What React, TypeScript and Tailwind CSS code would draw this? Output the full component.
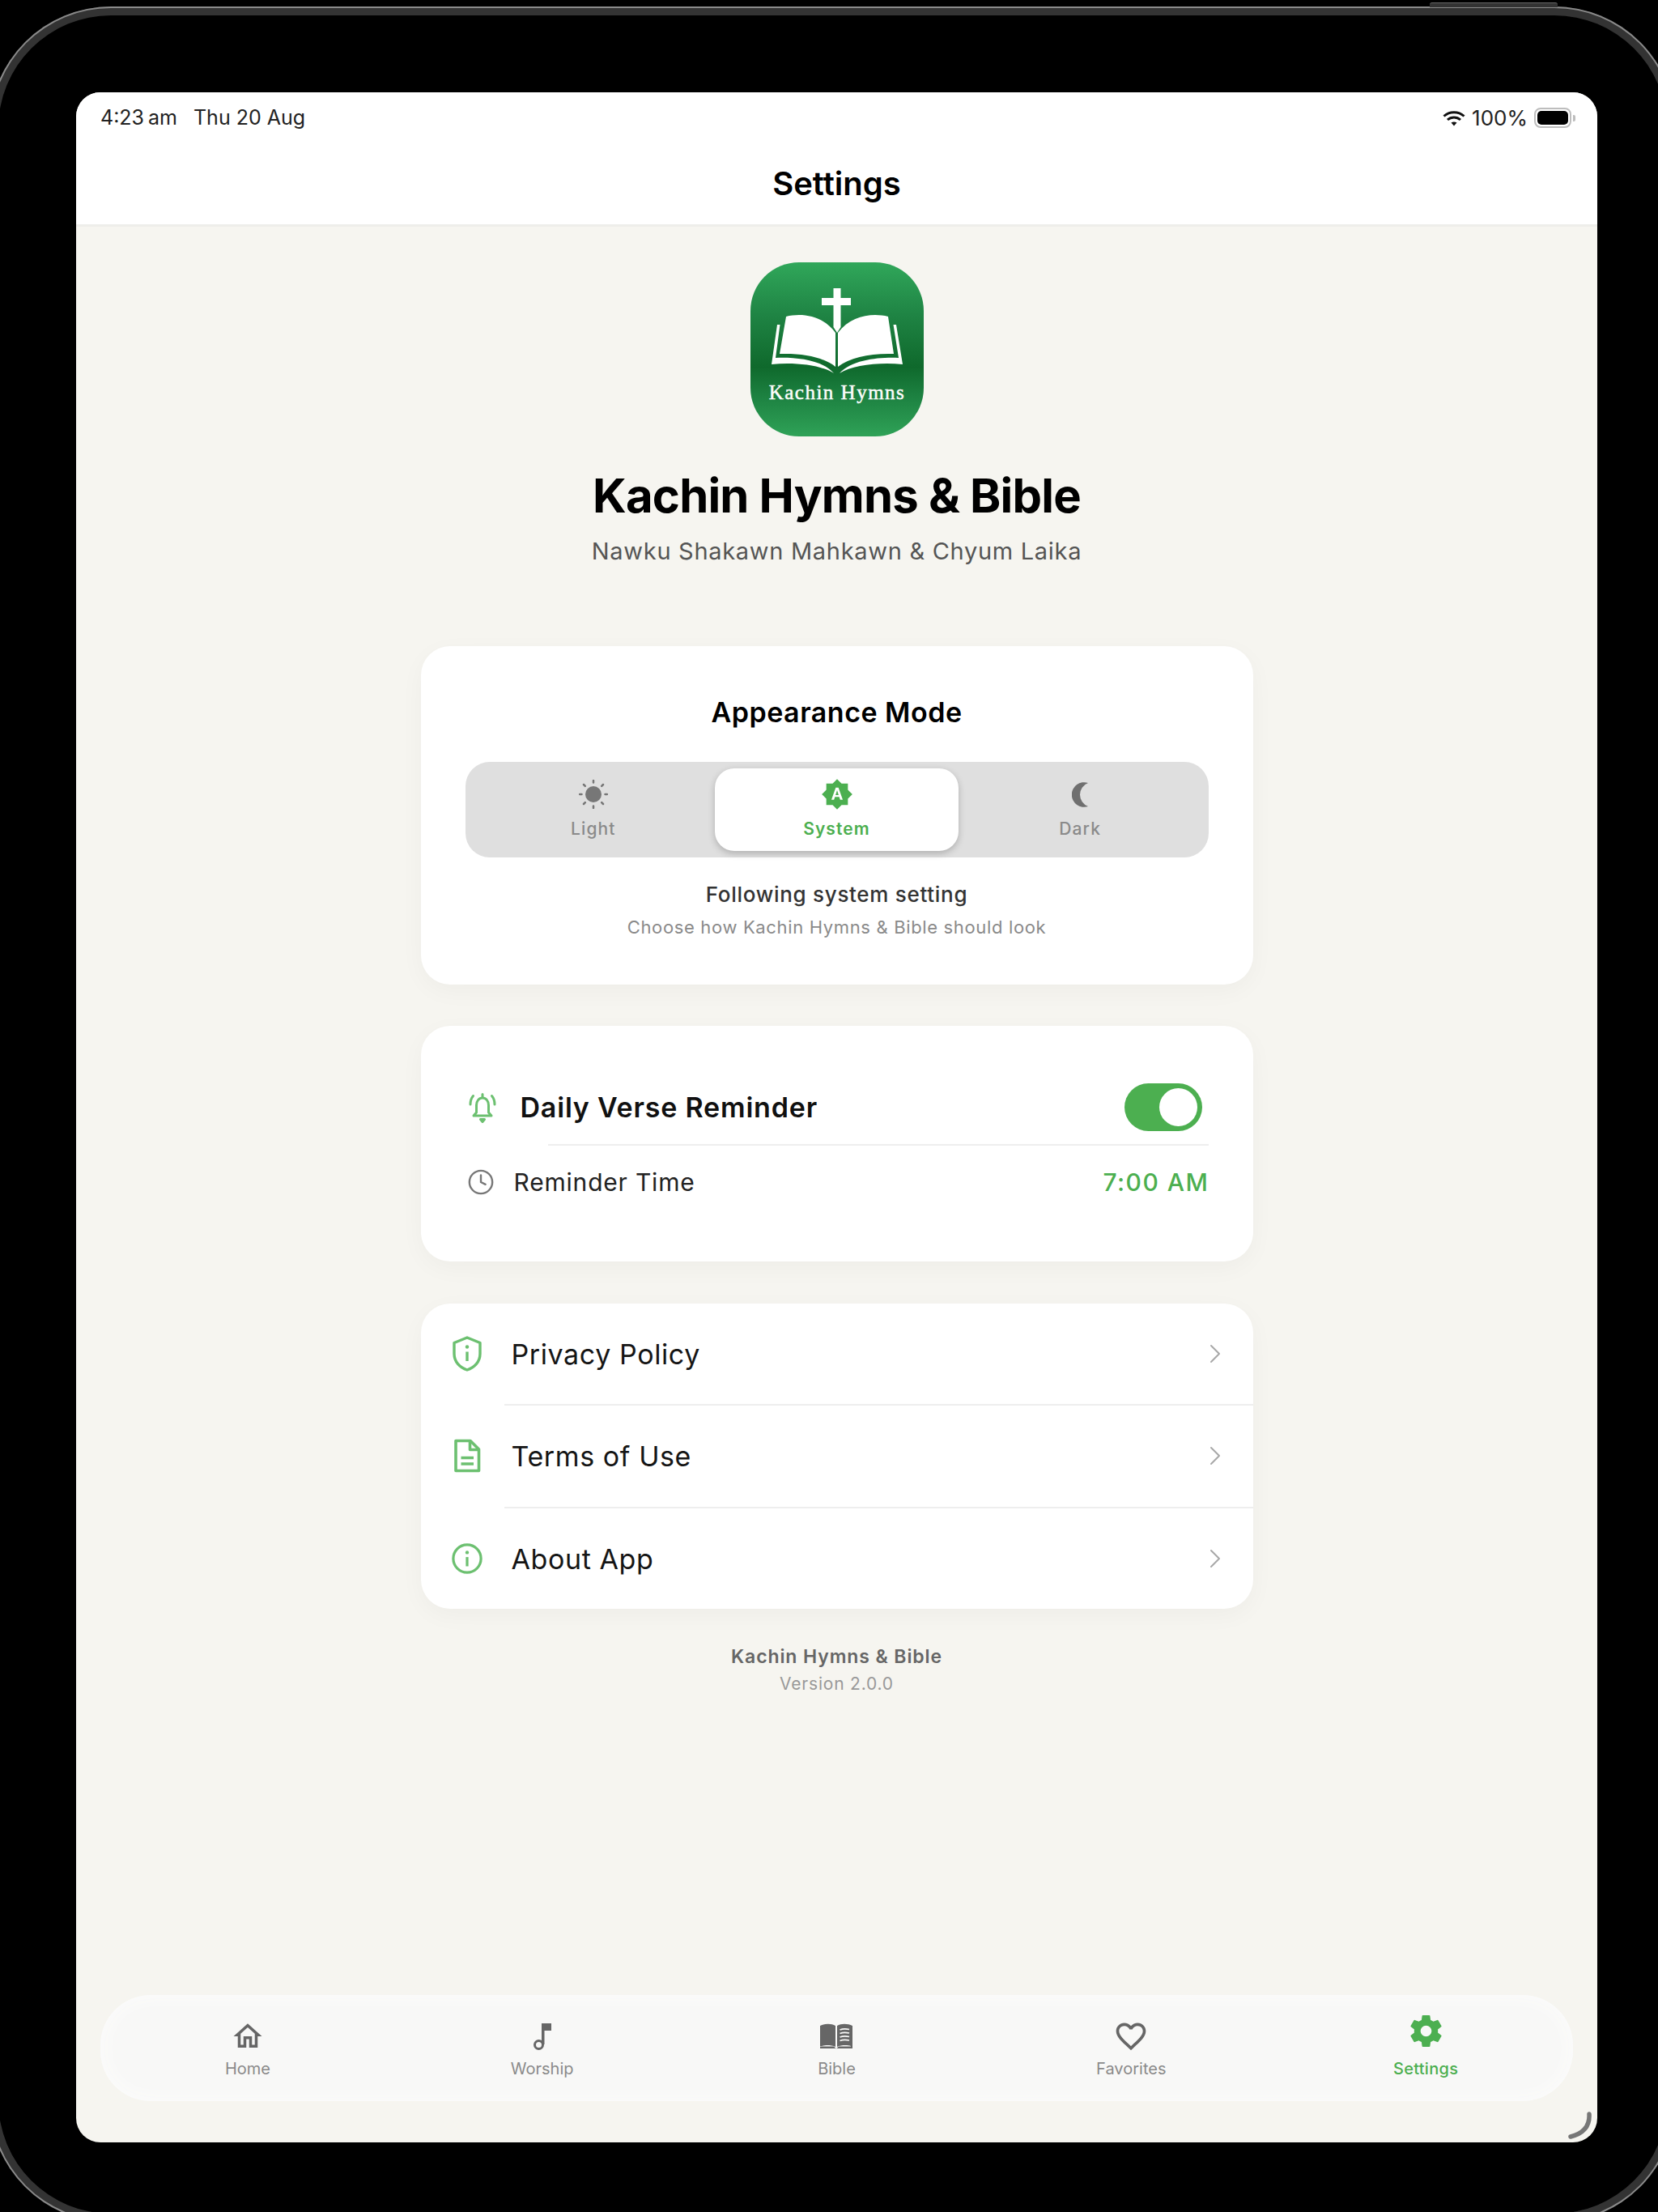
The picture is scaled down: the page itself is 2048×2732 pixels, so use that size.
import { Clock, ChevronRight } from "lucide-react";
import { MdBrightnessAuto } from "react-icons/md";

function Logo() {
  return (
    <div className="w-[214px] h-[215px] rounded-[60px] bg-[linear-gradient(180deg,#30a75a_0%,#1f8444_30%,#0f692c_60%,#1c8040_76%,#2fa257_100%)]">
      <svg width="214" height="215" viewBox="0 0 214 215">
        <path fill="#fff" d="M102.500 32h9v12H124v9h-12.500v27l-4.500 7-4.500-7V53H88v-9h14.500z" />
        <path fill="#fff" d="M44 67C64 62 90 66 105 87V129C90 117 65 112 36 113Z" />
        <path fill="#fff" d="M170 67C150 62 124 66 108 87V129C123 117 149 112 177 113Z" />
        <path fill="#fff" d="M33 77l3.500 0L31 118C55 117 88 120 103 137C88 127 55 123 26 126Z" />
        <path fill="#fff" d="M180 77l-3.500 0L183 118C159 117 126 120 110 137C126 127 159 123 188 126Z" />
        <text x="107" y="169" textAnchor="middle" fill="#fbfdfb" fontSize="25" fontWeight="400" letterSpacing="1.500" stroke="#fbfdfb" strokeWidth="0.500" fontFamily="Liberation Serif, serif">Kachin Hymns</text>
      </svg>
    </div>
  );
}

function Sun() {
  return (
    <svg width="36" height="36" viewBox="0 0 36 36" fill="#777">
      <circle cx="18" cy="18" r="10" />
      <g stroke="#777" strokeWidth="2.500" strokeLinecap="round">
        <path d="M18 1v2.500M18 32.500V35M1 18h2.500M32.500 18H35M6 6l1.800 1.800M28.200 28.200l1.800 1.800M6 30l1.800-1.800M28.200 7.800L30 6" />
      </g>
    </svg>
  );
}

function Moon() {
  return (
    <svg width="21" height="31" viewBox="0 0 21 31" fill="#6f6f6f">
      <path d="M20 1A15.300 15.300 0 1 0 20 30A15.500 15.500 0 0 1 20 1Z" />
    </svg>
  );
}

function BellRing() {
  return (
    <svg width="40" height="40" viewBox="0 0 40 40" fill="none" stroke="#6cc070" strokeWidth="3" strokeLinecap="round" strokeLinejoin="round">
      <path d="M9 30h22l-3.500-4V17c0-5-3-9-7.500-9s-7.500 4-7.500 9v9z" />
      <path d="M20 3.500V7M5 16c0-4 1-7.500 3.500-10.500M35 16c0-4-1-7.500-3.500-10.500" />
      <path d="M17.500 34.500h5L20 37.500z" fill="#6cc070" />
    </svg>
  );
}

function Shield() {
  return (
    <svg width="38" height="44" viewBox="0 0 38 44" fill="none" stroke="#6cc070" strokeWidth="3.400" strokeLinejoin="round">
      <path d="M19 2L35 8.500V22C35 32 28 39 19 42C10 39 3 32 3 22V8.500Z" />
      <path d="M19 19.500V31" />
      <circle cx="19" cy="13.500" r="2.200" fill="#6cc070" stroke="none" />
    </svg>
  );
}

function Doc() {
  return (
    <svg width="34" height="42" viewBox="0 0 34 42" fill="none" stroke="#6cc070" strokeWidth="3.600" strokeLinejoin="round">
      <path d="M3 2.500H21L31.500 13V39.500H3Z" />
      <path d="M20.500 2.500V13.500H31.500" />
      <path d="M9.500 23.500H25M9.500 31H25" />
    </svg>
  );
}

function InfoCircle() {
  return (
    <svg width="40" height="40" viewBox="0 0 40 40" fill="none" stroke="#6cc070" strokeWidth="3.400">
      <circle cx="20" cy="20" r="18" />
      <path d="M20 18V30" />
      <circle cx="20" cy="12" r="2.300" fill="#6cc070" stroke="none" />
    </svg>
  );
}

function Music() {
  return (
    <svg width="24" height="34" viewBox="0 0 24 34" fill="#666">
      <circle cx="7.500" cy="27.500" r="5" fill="none" stroke="#666" strokeWidth="3" />
      <rect x="11" y="1" width="3.500" height="26" />
      <rect x="11" y="1" width="12" height="9" />
    </svg>
  );
}

function Book() {
  return (
    <svg width="42" height="32" viewBox="0 0 42 32" fill="#666">
      <path d="M1 3C7 0 15 0 20 3V29C15 26.500 7 26.500 3.500 28H1Z" />
      <path d="M22 3C27 0 35 0 41 3V31H39V28C35 26.500 27 26.500 22 29Z" />
      <path d="M1 28.500H18L21 31.500L24 28.500H41V31H1Z" />
      <path d="M25.500 8C29 6.500 33 6.500 37 7.500M25.500 12.500C29 11 33 11 37 12M25.500 17C29 15.500 33 15.500 37 16.500M25.500 21.500C29 20 33 20 37 21" stroke="#f8f8f7" strokeWidth="1.800" fill="none" />
    </svg>
  );
}

function Home() {
  return (
    <svg width="42" height="42" viewBox="0 0 24 24" fill="#666">
      <path d="M12 5.690L17 10.190V18H15V12H9V18H7V10.190L12 5.690M12 3L2 12H5V20H11V14H13V20H19V12H22L12 3Z" />
    </svg>
  );
}

function Heart() {
  return (
    <svg width="44" height="44" viewBox="0 0 24 24" fill="#666">
      <path d="M12.100,18.550L12,18.650L11.890,18.550C7.140,14.240 4,11.390 4,8.500C4,6.500 5.500,5 7.500,5C9.040,5 10.540,6 11.070,7.360H12.930C13.460,6 14.960,5 16.500,5C18.500,5 20,6.500 20,8.500C20,11.390 16.860,14.240 12.100,18.550M16.500,3C14.760,3 13.090,3.810 12,5.080C10.910,3.810 9.240,3 7.500,3C4.420,3 2,5.410 2,8.500C2,12.270 5.400,15.360 10.550,20.030L12,21.350L13.450,20.030C18.600,15.360 22,12.270 22,8.500C22,5.410 19.580,3 16.500,3Z" />
    </svg>
  );
}

function Cog() {
  return (
    <svg width="47" height="47" viewBox="0 0 24 24" fill="#4caf50">
      <path d="M12,15.500A3.500,3.500 0 0,1 8.500,12A3.500,3.500 0 0,1 12,8.500A3.500,3.500 0 0,1 15.500,12A3.500,3.500 0 0,1 12,15.500M19.430,12.970C19.470,12.650 19.500,12.330 19.500,12C19.500,11.670 19.470,11.340 19.430,11L21.540,9.370C21.730,9.220 21.780,8.950 21.660,8.730L19.660,5.270C19.540,5.050 19.270,4.960 19.050,5.050L16.560,6.050C16.040,5.660 15.500,5.320 14.870,5.070L14.500,2.420C14.460,2.180 14.250,2 14,2H10C9.750,2 9.540,2.180 9.500,2.420L9.130,5.070C8.500,5.320 7.960,5.660 7.440,6.050L4.950,5.050C4.730,4.960 4.460,5.050 4.340,5.270L2.340,8.730C2.210,8.950 2.270,9.220 2.460,9.370L4.570,11C4.530,11.340 4.500,11.670 4.500,12C4.500,12.330 4.530,12.650 4.570,12.970L2.460,14.630C2.270,14.780 2.210,15.050 2.340,15.270L4.340,18.730C4.460,18.950 4.730,19.030 4.950,18.950L7.440,17.940C7.960,18.340 8.500,18.680 9.130,18.930L9.500,21.580C9.540,21.820 9.750,22 10,22H14C14.250,22 14.460,21.820 14.500,21.580L14.870,18.930C15.500,18.670 16.040,18.340 16.560,17.940L19.050,18.950C19.270,19.030 19.540,18.950 19.660,18.730L21.660,15.270C21.780,15.050 21.730,14.780 21.540,14.630L19.430,12.970Z" />
    </svg>
  );
}

function Wifi() {
  return (
    <svg width="28" height="20" viewBox="0 0 28 20" fill="none" stroke="#111" strokeWidth="3">
      <path d="M1.500 7.500C8.500 1 19.500 1 26.500 7.500M6 12C10.500 8 17.500 8 22 12" />
      <path d="M10.500 15.500L14 19.500L17.500 15.500C15.500 14 12.500 14 10.500 15.500Z" fill="#111" stroke="none" />
    </svg>
  );
}

function Battery() {
  return (
    <div className="flex items-center">
      <div className="w-[46px] h-[25px] rounded-[8px] border-2 border-[#bdbdbd] p-[2px]">
        <div className="w-full h-full rounded-[5px] bg-black" />
      </div>
      <div className="ml-[2px] w-[3px] h-[8px] rounded-r-[2px] bg-[#bdbdbd]" />
    </div>
  );
}

function Seg({ label, active, children }: { label: string; active?: boolean; children: React.ReactNode }) {
  return (
    <div className={active ? "flex-1 rounded-[24px] bg-white shadow-[0_3px_8px_rgba(0,0,0,0.22)] flex flex-col items-center" : "flex-1 flex flex-col items-center"}>
      <div className="h-[40px] mt-[12px] flex items-center justify-center">{children}</div>
      <div className={active ? "mt-[8px] text-[21px] leading-[30px] font-semibold tracking-[1.1px] text-[#4caf50]" : "mt-[8px] text-[21px] leading-[30px] font-medium tracking-[1.1px] text-[#8a8a8a]"}>{label}</div>
    </div>
  );
}

function LinkRow({ label, children }: { label: string; children: React.ReactNode }) {
  return (
    <div className="flex-1 flex items-center pl-[38px] pr-[27px]">
      <div className="w-[38px] flex justify-center">{children}</div>
      <div className="ml-[36px] flex-1 pt-[2px] text-[34px] leading-[44px] tracking-[0.6px] text-[#151515]">{label}</div>
      <ChevronRight size={40} strokeWidth={1.200} color="#a8a8a8" />
    </div>
  );
}

function Tab({ label, active, children }: { label: string; active?: boolean; children: React.ReactNode }) {
  return (
    <div className="flex flex-col items-center">
      <div className={active ? "h-[52px] pb-[14px] flex items-center" : "h-[52px] flex items-center"}>{children}</div>
      <div className={active ? "text-[20px] leading-[28px] font-medium tracking-[0.3px] text-[#4caf50]" : "text-[20px] leading-[28px] text-[#8a8a8a]"}>{label}</div>
    </div>
  );
}

export default function App() {
  return (
    <div className="relative w-[2048px] h-[2732px] bg-black overflow-hidden pl-[94px] pt-[114px] font-[family-name:Inter,sans-serif]">
      {/* device frame */}
      <div className="absolute left-[-13px] top-[8px] w-[2083px] h-[2737px] rounded-[150px] shadow-[inset_0_0_0_2px_#8a8a8a,inset_0_0_0_11px_#333]" />
      <div className="absolute left-[1766px] top-[3px] w-[158px] h-[6px] rounded-t-[3px] bg-[#333] border-t border-[#666]" />

      <div className="relative w-[1879px] h-[2532px] rounded-[30px] overflow-hidden bg-[#f6f5f0] flex flex-col">
        <div className="h-[166px] bg-white border-b-[3px] border-[#eeeeea] flex flex-col shrink-0">
          <div className="h-[63px] pl-[30px] pr-[27px] flex items-center justify-between text-[25px] text-[#222]">
            <div className="flex">
              <span>4:23</span>
              <span className="ml-[5px]">am</span>
              <span className="ml-[20px]">Thu 20 Aug</span>
            </div>
            <div className="flex items-center">
              <Wifi />
              <span className="ml-[8px] text-[26px]">100%</span>
              <span className="ml-[8px]"><Battery /></span>
            </div>
          </div>
          <div className="text-center text-[40px] leading-[46px] mt-[27px] font-semibold text-black">Settings</div>
        </div>

        <div className="flex-1 flex flex-col items-center">
          <div className="mt-[44px]"><Logo /></div>
          <div className="mt-[39px] text-[58px] leading-[68px] font-bold tracking-[-0.8px] text-black">Kachin Hymns &amp; Bible</div>
          <div className="mt-[17px] text-[29px] leading-[36px] tracking-[0.7px] text-[#555]">Nawku Shakawn Mahkawn &amp; Chyum Laika</div>

          <div className="mt-[99px] w-[1028px] h-[418px] rounded-[36px] bg-white shadow-[0_8px_30px_rgba(0,0,0,0.035)] px-[55px] pt-[60px] flex flex-col items-center">
            <div className="text-[34px] leading-[44px] font-semibold tracking-[0.5px] text-black">Appearance Mode</div>
            <div className="mt-[39px] w-full h-[118px] rounded-[30px] bg-[#dfdfdf] p-[8px] flex">
              <Seg label="Light"><Sun /></Seg>
              <Seg label="System" active><MdBrightnessAuto size={40} color="#4caf50" /></Seg>
              <Seg label="Dark"><Moon /></Seg>
            </div>
            <div className="mt-[29px] text-[26px] leading-[34px] font-medium tracking-[0.7px] text-[#333]">Following system setting</div>
            <div className="mt-[8px] text-[22px] leading-[30px] tracking-[0.65px] text-[#8a8a8a]">Choose how Kachin Hymns &amp; Bible should look</div>
          </div>

          <div className="mt-[51px] w-[1028px] h-[291px] rounded-[36px] bg-white shadow-[0_8px_30px_rgba(0,0,0,0.035)] pt-[71px] flex flex-col">
            <div className="h-[59px] pl-[56px] pr-[63px] flex items-center justify-between">
              <div className="flex items-center">
                <BellRing />
                <span className="ml-[27px] text-[34px] font-semibold tracking-[0.8px] text-[#111]">Daily Verse Reminder</span>
              </div>
              <div className="w-[96px] h-[59px] rounded-full bg-[#4caf50] p-[6px] flex justify-end">
                <div className="w-[47px] h-[47px] rounded-full bg-white" />
              </div>
            </div>
            <div className="mt-[16px] ml-[157px] mr-[55px] h-[2px] bg-[#eeeeee]" />
            <div className="mt-[15px] h-[60px] pl-[57px] pr-[54px] flex items-center justify-between">
              <div className="flex items-center">
                <Clock size={34} strokeWidth={1.700} color="#777" />
                <span className="ml-[24px] text-[30px] tracking-[0.8px] text-[#222]">Reminder Time</span>
              </div>
              <span className="text-[30px] font-medium tracking-[1.5px] text-[#4caf50]">7:00 AM</span>
            </div>
          </div>

          <div className="mt-[52px] w-[1028px] h-[377px] rounded-[36px] bg-white shadow-[0_8px_30px_rgba(0,0,0,0.035)] flex flex-col">
            <LinkRow label="Privacy Policy"><Shield /></LinkRow>
            <div className="ml-[103px] h-[2px] bg-[#eeeeee]" />
            <LinkRow label="Terms of Use"><Doc /></LinkRow>
            <div className="ml-[103px] h-[2px] bg-[#eeeeee]" />
            <LinkRow label="About App"><InfoCircle /></LinkRow>
          </div>

          <div className="mt-[44px] text-[23px] leading-[30px] font-semibold tracking-[0.9px] text-[#666]">Kachin Hymns &amp; Bible</div>
          <div className="mt-[5px] text-[21px] leading-[28px] tracking-[0.8px] text-[#999]">Version 2.0.0</div>
        </div>

        <div className="mx-[30px] mb-[51px] h-[131px] rounded-[62px] bg-[#f8f8f7] shadow-[inset_0_0_24px_#fdfdfc] grid grid-cols-5 pt-[25px] shrink-0">
          <Tab label="Home"><Home /></Tab>
          <Tab label="Worship"><Music /></Tab>
          <Tab label="Bible"><Book /></Tab>
          <Tab label="Favorites"><Heart /></Tab>
          <Tab label="Settings" active><Cog /></Tab>
        </div>

        <svg className="absolute left-[1840px] top-[2494px]" width="34" height="34" viewBox="0 0 34 34" fill="none">
          <path d="M29 3C30 18 22 27 6 31" stroke="#777" strokeWidth="5.500" strokeLinecap="round" />
        </svg>
      </div>
    </div>
  );
}
